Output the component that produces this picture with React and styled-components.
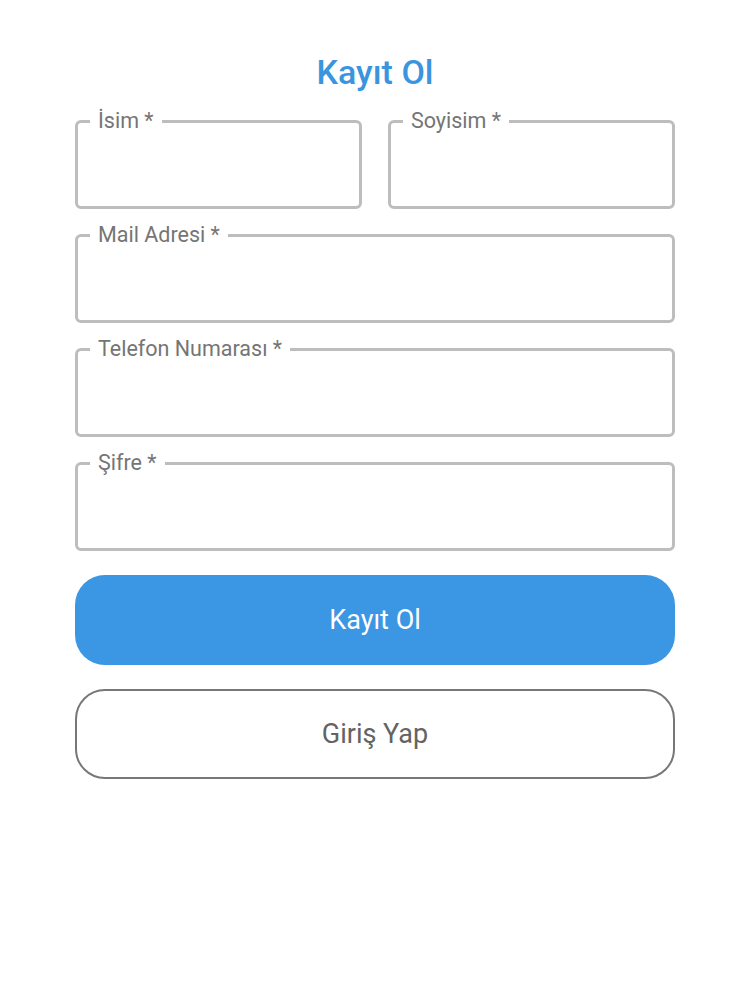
import React from "react";
import styled, { createGlobalStyle } from "styled-components";

const GlobalStyle = createGlobalStyle`
  body {
    margin: 0;
    background: #ffffff;
    font-family: Roboto, "Noto Sans", sans-serif;
  }
`;

const fields = [
  [{ label: "İsim *", name: "name" }, { label: "Soyisim *", name: "surname" }],
  [{ label: "Mail Adresi *", name: "mail", type: "email" }],
  [{ label: "Telefon Numarası *", name: "phone", type: "tel" }],
  [{ label: "Şifre *", name: "password", type: "password" }],
];

const App = () => {
  return (
    <>
      <GlobalStyle />
      <Page>
        <Title>Kayıt Ol</Title>
        <Form onSubmit={(e) => e.preventDefault()}>
          {fields.map((row, i) => (
            <Row key={i}>
              {row.map((f) => (
                <Field key={f.name}>
                  <Legend>{f.label}</Legend>
                  <Input name={f.name} type={f.type || "text"} />
                </Field>
              ))}
            </Row>
          ))}
          <Button primary type="submit">Kayıt Ol</Button>
          <Button type="button">Giriş Yap</Button>
        </Form>
      </Page>
    </>
  );
};

export default App;

const Page = styled.div`
  width: 600px;
  margin: 0 auto;
  padding-top: 50px;
`;

const Title = styled.h1`
  margin: 0 0 16px;
  text-align: center;
  font-size: 34px;
  line-height: 44px;
  font-weight: 500;
  color: #3a95de;
`;

const Form = styled.form`
  display: flex;
  flex-direction: column;
`;

const Row = styled.div`
  display: flex;
  gap: 26px;
  margin-bottom: 15px;
`;

const Field = styled.fieldset`
  flex: 1;
  min-width: 0;
  margin: 0;
  padding: 0;
  border: 3px solid #bdbdbd;
  border-radius: 6px;
`;

const Legend = styled.legend`
  margin-left: 12px;
  padding: 0 8px;
  font-size: 21.5px;
  line-height: 22px;
  color: #757575;
`;

const Input = styled.input`
  display: block;
  box-sizing: border-box;
  width: 100%;
  height: 74px;
  border: none;
  outline: none;
  background: transparent;
  padding: 0 22px;
  font-family: inherit;
  font-size: 18px;
  color: #333;
`;

const Button = styled.button`
  box-sizing: border-box;
  height: 90px;
  margin-top: ${({ primary }) => (primary ? "9px" : "24px")};
  border-radius: 30px;
  border: ${({ primary }) => (primary ? "none" : "2.5px solid #777777")};
  background: ${({ primary }) => (primary ? "#3b97e3" : "#ffffff")};
  color: ${({ primary }) => (primary ? "#ffffff" : "#636363")};
  font-family: inherit;
  font-size: 27px;
  font-weight: 400;
  cursor: pointer;
`;
